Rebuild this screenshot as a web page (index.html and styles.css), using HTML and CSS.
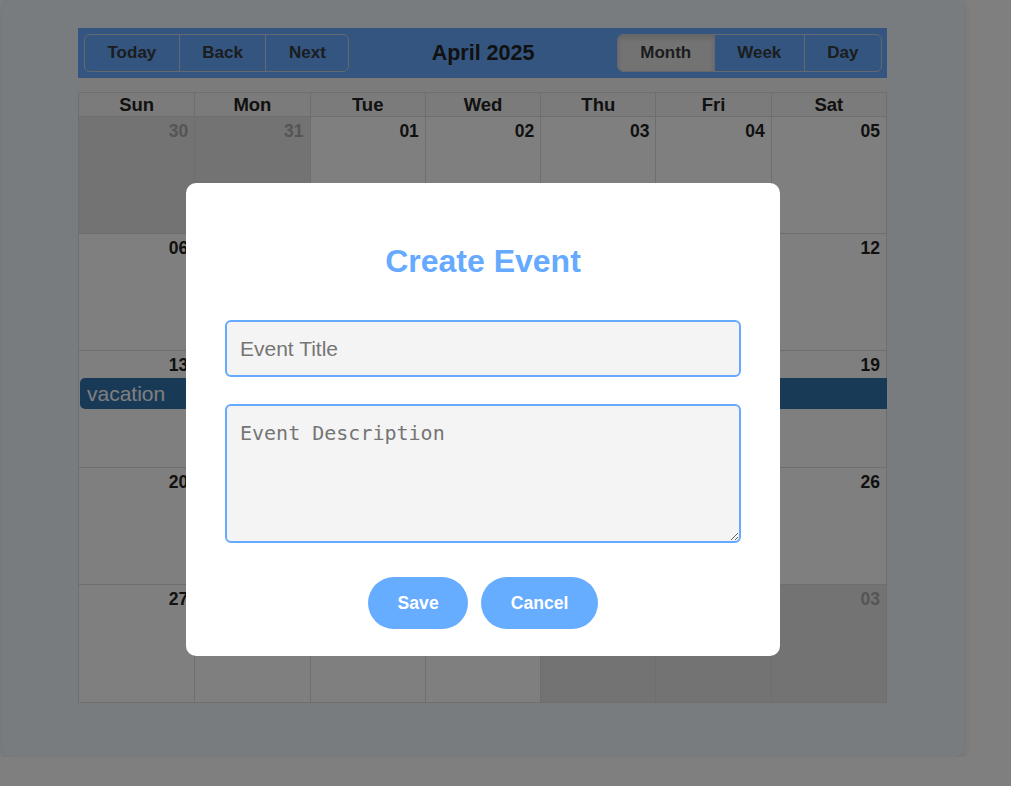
FILE: index.html
```html
<!DOCTYPE html>
<html lang="en">
<head>
<meta charset="utf-8">
<title>Calendar</title>
<link rel="stylesheet" href="styles.css">
</head>
<body>
<div class="card">
  <div class="calendar">
    <div class="toolbar">
      <div class="btn-group">
        <button class="tb-btn">Today</button>
        <button class="tb-btn">Back</button>
        <button class="tb-btn">Next</button>
      </div>
      <div class="tb-label">April 2025</div>
      <div class="btn-group">
        <button class="tb-btn active">Month</button>
        <button class="tb-btn">Week</button>
        <button class="tb-btn">Day</button>
      </div>
    </div>
    <div class="month">
      <div class="head-row">
        <div class="head">Sun</div><div class="head">Mon</div><div class="head">Tue</div><div class="head">Wed</div><div class="head">Thu</div><div class="head">Fri</div><div class="head">Sat</div>
      </div>
      <div class="week">
        <div class="day off"><span class="num">30</span></div>
        <div class="day off"><span class="num">31</span></div>
        <div class="day"><span class="num">01</span></div>
        <div class="day"><span class="num">02</span></div>
        <div class="day"><span class="num">03</span></div>
        <div class="day"><span class="num">04</span></div>
        <div class="day"><span class="num">05</span></div>
      </div>
      <div class="week">
        <div class="day"><span class="num">06</span></div>
        <div class="day"><span class="num">07</span></div>
        <div class="day"><span class="num">08</span></div>
        <div class="day"><span class="num">09</span></div>
        <div class="day"><span class="num">10</span></div>
        <div class="day"><span class="num">11</span></div>
        <div class="day"><span class="num">12</span></div>
      </div>
      <div class="week">
        <div class="day"><span class="num">13</span></div>
        <div class="day"><span class="num">14</span></div>
        <div class="day"><span class="num">15</span></div>
        <div class="day"><span class="num">16</span></div>
        <div class="day"><span class="num">17</span></div>
        <div class="day"><span class="num">18</span></div>
        <div class="day"><span class="num">19</span></div>
        <div class="event">vacation</div>
      </div>
      <div class="week">
        <div class="day"><span class="num">20</span></div>
        <div class="day"><span class="num">21</span></div>
        <div class="day"><span class="num">22</span></div>
        <div class="day"><span class="num">23</span></div>
        <div class="day"><span class="num">24</span></div>
        <div class="day"><span class="num">25</span></div>
        <div class="day"><span class="num">26</span></div>
      </div>
      <div class="week">
        <div class="day"><span class="num">27</span></div>
        <div class="day"><span class="num">28</span></div>
        <div class="day"><span class="num">29</span></div>
        <div class="day"><span class="num">30</span></div>
        <div class="day off"><span class="num">01</span></div>
        <div class="day off"><span class="num">02</span></div>
        <div class="day off"><span class="num">03</span></div>
      </div>
    </div>
  </div>
</div>

<div class="overlay">
  <div class="modal">
    <h2 class="modal-title">Create Event</h2>
    <input class="field" type="text" placeholder="Event Title">
    <textarea class="area" placeholder="Event Description"></textarea>
    <div class="actions">
      <button class="pill">Save</button>
      <button class="pill">Cancel</button>
    </div>
  </div>
</div>
</body>
</html>
```

FILE: styles.css
```css
* { box-sizing: border-box; }

html, body {
  margin: 0;
  padding: 0;
  background: #ffffff;
  font-family: "Liberation Sans", Arial, sans-serif;
}

.card {
  margin-left: 2px;
  width: 962px;
  padding: 28px 77px 54px 76px;
  background: #f2f9ff;
  border-radius: 0 0 10px 10px;
  box-shadow: 0 4px 10px rgba(0, 0, 0, 0.12);
}

.calendar {
  width: 809px;
  background: #f6f6f6;
}

.toolbar {
  height: 50px;
  background: #66aaff;
  display: flex;
  align-items: center;
  justify-content: space-between;
  padding: 0 5px 0 6px;
  margin-bottom: 14px;
}

.btn-group {
  display: flex;
  height: 38px;
  border: 1px solid #c9d3e0;
  border-radius: 6px;
  overflow: hidden;
}

.tb-btn {
  font-family: "Liberation Sans", Arial, sans-serif;
  font-size: 17px;
  font-weight: bold;
  color: #373a3c;
  background: transparent;
  border: none;
  border-left: 1px solid #c9d3e0;
  padding: 0 22.5px;
  margin: 0;
  height: 100%;
}

.tb-btn:first-child { border-left: none; }

.tb-btn.active {
  background: #e6e6e6;
  box-shadow: inset 0 3px 5px rgba(0, 0, 0, 0.125);
}

.tb-label {
  flex: 1;
  text-align: center;
  font-size: 21.5px;
  font-weight: bold;
  color: #222;
}

.month {
  border: 1px solid #dddddd;
  background: #ffffff;
}

.head-row {
  display: grid;
  grid-template-columns: repeat(7, 1fr);
  height: 24px;
  border-bottom: 1px solid #dddddd;
  background: #f6f6f6;
}

.head {
  text-align: center;
  font-size: 18.5px;
  font-weight: bold;
  color: #222;
  line-height: 23px;
  border-left: 1px solid #dddddd;
}

.head:first-child { border-left: none; }

.week {
  display: grid;
  grid-template-columns: repeat(7, 1fr);
  grid-template-rows: 116px;
  border-bottom: 1px solid #dddddd;
}

.week:last-child { border-bottom: none; grid-template-rows: 117px; }

.day {
  grid-row: 1;
  border-left: 1px solid #dddddd;
  text-align: right;
  padding: 4px 6px 0 0;
  background: #ffffff;
}

.day:nth-child(1) { grid-column: 1; border-left: none; }
.day:nth-child(2) { grid-column: 2; }
.day:nth-child(3) { grid-column: 3; }
.day:nth-child(4) { grid-column: 4; }
.day:nth-child(5) { grid-column: 5; }
.day:nth-child(6) { grid-column: 6; }
.day:nth-child(7) { grid-column: 7; }

.day.off { background: #e6e6e6; }

.num {
  font-size: 17.5px;
  font-weight: bold;
  color: #222;
  line-height: 20px;
}

.day.off .num { color: #aaaaaa; }

.event {
  grid-row: 1;
  grid-column: 1 / -1;
  align-self: start;
  margin: 27px -1px 0 1px;
  height: 31px;
  background: #3174ad;
  color: #ffffff;
  font-size: 21px;
  line-height: 31px;
  padding: 0 7px;
  border-radius: 5px 0 0 5px;
}

.overlay {
  position: fixed;
  inset: 0;
  background: rgba(0, 0, 0, 0.5);
}

.modal {
  position: absolute;
  left: 186px;
  top: 183px;
  width: 594px;
  background: #ffffff;
  border-radius: 10px;
  padding: 40px 39px 27px;
  display: flex;
  flex-direction: column;
}

.modal-title {
  margin: 20px 0 40px;
  text-align: center;
  color: #66aaff;
  font-size: 32px;
  line-height: 37px;
  font-weight: bold;
}

.field {
  height: 57px;
  width: 100%;
  border: 2px solid #66aaff;
  border-radius: 6px;
  background: #f4f4f4;
  padding: 0 13px;
  font-family: "Liberation Sans", Arial, sans-serif;
  font-size: 21px;
  outline: none;
}

.area {
  margin-top: 27px;
  height: 139px;
  width: 100%;
  border: 2px solid #66aaff;
  border-radius: 6px;
  background: #f4f4f4;
  padding: 14px 13px 13px;
  font-family: "DejaVu Sans Mono", monospace;
  font-size: 20px;
  line-height: 26px;
  outline: none;
}

.actions {
  margin-top: 34px;
  display: flex;
  justify-content: center;
  gap: 13px;
}

.pill {
  height: 52px;
  padding: 0 29.5px;
  border: none;
  border-radius: 26px;
  background: #66acff;
  color: #ffffff;
  font-family: "Liberation Sans", Arial, sans-serif;
  font-size: 17.6px;
  font-weight: bold;
}
```
